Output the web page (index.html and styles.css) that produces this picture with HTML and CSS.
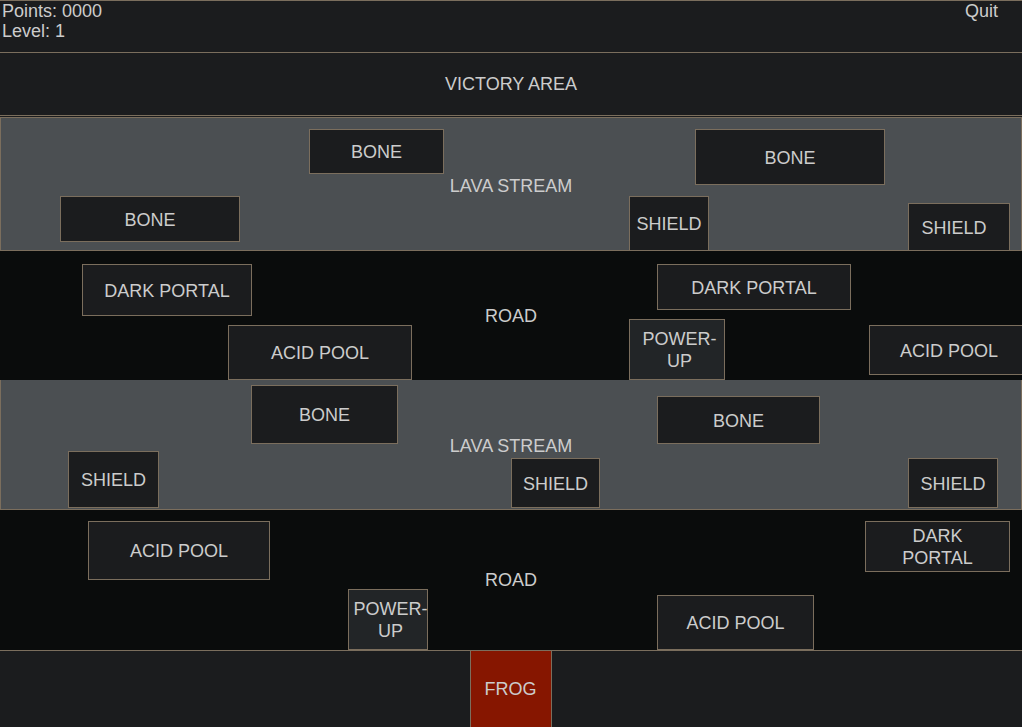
FILE: index.html
```html
<!DOCTYPE html>
<html>
<head>
<meta charset="utf-8">
<link rel="stylesheet" href="styles.css">
</head>
<body>
<div class="game">
  <header class="hud">
    <div class="stats">
      <div>Points: 0000</div>
      <div>Level: 1</div>
    </div>
    <div class="quit">Quit</div>
  </header>
  <section class="victory">VICTORY AREA</section>

  <section class="lane lava lava1">
    <span class="label">LAVA STREAM</span>
    <div class="obj" style="left:308px;top:11px;width:135px;height:45px">BONE</div>
    <div class="obj" style="left:694px;top:11px;width:190px;height:56px">BONE</div>
    <div class="obj" style="left:59px;top:78px;width:180px;height:46px">BONE</div>
    <div class="obj" style="left:628px;top:78px;width:80px;height:55px">SHIELD</div>
    <div class="obj obj-edge" style="left:907px;top:85px;width:102px;height:48px">SHIELD</div>
  </section>

  <section class="lane road road1">
    <span class="label">ROAD</span>
    <div class="obj" style="left:82px;top:13px;width:170px;height:52px">DARK PORTAL</div>
    <div class="obj" style="left:657px;top:13px;width:194px;height:46px">DARK PORTAL</div>
    <div class="obj" style="left:228px;top:74px;width:184px;height:55px">ACID POOL</div>
    <div class="obj power" style="left:629px;top:68px;width:96px;height:61px">POWER-UP</div>
    <div class="obj" style="left:869px;top:74px;width:160px;height:50px">ACID POOL</div>
  </section>

  <section class="lane lava lava2">
    <span class="label">LAVA STREAM</span>
    <div class="obj" style="left:250px;top:5px;width:147px;height:59px">BONE</div>
    <div class="obj" style="left:656px;top:16px;width:163px;height:48px">BONE</div>
    <div class="obj" style="left:67px;top:71px;width:91px;height:57px">SHIELD</div>
    <div class="obj" style="left:510px;top:78px;width:89px;height:50px">SHIELD</div>
    <div class="obj" style="left:907px;top:78px;width:90px;height:50px">SHIELD</div>
  </section>

  <section class="lane road road2">
    <span class="label">ROAD</span>
    <div class="obj" style="left:88px;top:11px;width:182px;height:59px">ACID POOL</div>
    <div class="obj" style="left:865px;top:11px;width:145px;height:51px">DARK PORTAL</div>
    <div class="obj power" style="left:348px;top:79px;width:80px;height:61px">POWER-UP</div>
    <div class="obj" style="left:657px;top:85px;width:157px;height:55px">ACID POOL</div>
  </section>

  <section class="start">
    <div class="frog">FROG</div>
  </section>
</div>
</body>
</html>
```

FILE: styles.css
```css
html, body {
  margin: 0;
  padding: 0;
  background: #1b1c1e;
  overflow: hidden;
}

.game {
  width: 1022px;
  height: 727px;
  font-family: "Liberation Sans", Arial, sans-serif;
  font-size: 18px;
  color: #cccccc;
  display: flex;
  flex-direction: column;
  overflow: hidden;
}

.hud {
  height: 51px;
  border-top: 1px solid #7b6e5d;
  border-bottom: 1px solid #7b6e5d;
  display: flex;
  justify-content: space-between;
  align-items: flex-start;
  padding: 0 24px 0 2px;
  line-height: 20px;
  flex: none;
}

.victory {
  height: 62px;
  border-bottom: 1px solid #7b6e5d;
  margin-bottom: 1px;
  display: flex;
  align-items: center;
  justify-content: center;
  flex: none;
}

.lane {
  position: relative;
  display: flex;
  align-items: center;
  justify-content: center;
  flex: none;
  box-sizing: border-box;
}

.lava {
  background: #4b4f52;
  border: 1px solid #7b6e5d;
}

.lava1 { height: 134px; }
.lava2 { height: 130px; border-top: none; }

.road {
  background: #0a0c0c;
}

.road1 { height: 129px; }
.road2 { height: 140px; }

.label {
  line-height: 20px;
}

.lava1 .label { margin-top: 4px; }
.road1 .label { margin-top: 1px; }
.lava2 .label { margin-top: 2px; }
.road2 .label { margin-top: 0; }

.obj {
  position: absolute;
  box-sizing: border-box;
  border: 1px solid #7b6e5d;
  background: #1b1c1e;
  display: flex;
  align-items: center;
  justify-content: center;
  text-align: center;
  padding: 1px 10px 0;
  line-height: 22px;
}

.obj-edge {
  padding-right: 20px;
}

.obj.power {
  background: #222527;
  padding-left: 13px;
  padding-right: 8px;
}

.start {
  flex: 1;
  border-top: 1px solid #7b6e5d;
  display: flex;
  justify-content: center;
}

.frog {
  width: 82px;
  height: 78px;
  box-sizing: border-box;
  margin-top: -1px;
  margin-left: -1px;
  border: 1px solid #7b6e5d;
  background: #861600;
  display: flex;
  align-items: center;
  justify-content: center;
}
```
